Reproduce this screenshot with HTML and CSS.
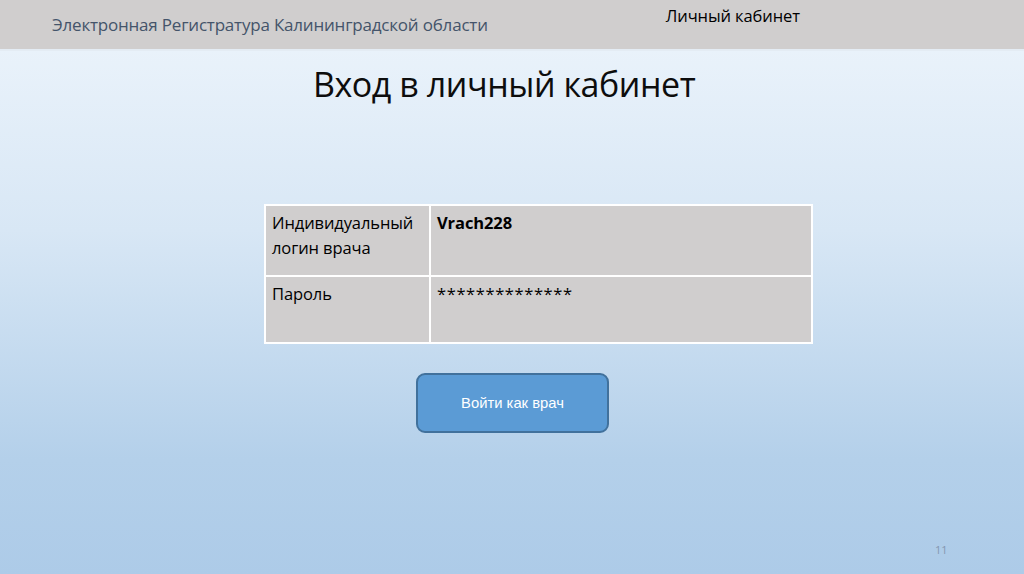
FILE: index.html
```html
<!DOCTYPE html>
<html lang="ru">
<head>
    <meta charset="UTF-8">
    <title>Вход в личный кабинет</title>
    <link rel="stylesheet" href="styles.css">
</head>
<body>
    <div class="slide">
        <div class="topbar">
            <span class="site-name">Электронная Регистратура Калининградской области</span>
            <span class="section-name">Личный кабинет</span>
        </div>
        <h1>Вход в личный кабинет</h1>
        <table class="login">
            <tr class="row-login">
                <td class="label">Индивидуальный логин врача</td>
                <td class="value"><b>Vrach228</b></td>
            </tr>
            <tr class="row-pass">
                <td class="label">Пароль</td>
                <td class="value stars">**************</td>
            </tr>
        </table>
        <div class="actions">
            <button type="button">Войти как врач</button>
        </div>
        <div class="page-num">11</div>
    </div>
</body>
</html>
```

FILE: styles.css
```css
html, body {
    margin: 0;
    padding: 0;
}
body {
    font-family: 'Open Sans', sans-serif;
    color: #000;
}
.slide {
    width: 1024px;
    height: 574px;
    background: linear-gradient(to bottom, #eef5fc 0%, #d8e7f5 40%, #b4d0ea 80%, #adcbe8 100%);
    display: flex;
    flex-direction: column;
    position: relative;
    overflow: hidden;
}
.topbar {
    height: 49px;
    background-color: #d0cece;
    display: flex;
    align-items: flex-start;
    border-bottom: 2px solid #e4ecf4;
}
.site-name {
    margin-left: 52px;
    margin-top: 13px;
    font-size: 17px;
    color: #44546a;
    letter-spacing: -0.2px;
}
.section-name {
    margin-left: 178px;
    margin-top: 4px;
    font-size: 16.5px;
    letter-spacing: -0.1px;
}
h1 {
    margin: 10px 0 0 313px;
    font-size: 34px;
    font-weight: normal;
    letter-spacing: -0.45px;
    color: #0d0d0d;
}
.login {
    margin: 97px 0 0 264px;
    width: 549px;
    border-collapse: collapse;
    border: 2px solid #fff;
    font-size: 16.5px;
    letter-spacing: -0.1px;
}
.login td {
    background-color: #d0cece;
    border: 2px solid #fff;
    vertical-align: top;
    padding: 4px 6px;
    line-height: 25px;
}
.login .row-login {
    height: 71px;
}
.login .row-pass {
    height: 67px;
}
.login .label {
    width: 151px;
}
.login .stars {
    letter-spacing: 0.6px;
}
.actions {
    margin: 29px 0 0 416px;
}
button {
    width: 193px;
    height: 60px;
    background-color: #5b9bd5;
    border: 2px solid #41719c;
    border-radius: 9px;
    color: #fff;
    font-family: 'Liberation Sans', sans-serif;
    font-size: 14.8px;
    padding: 0;
}
.page-num {
    position: absolute;
    left: 935px;
    top: 542px;
    font-size: 11px;
    color: #8497b0;
}
```
